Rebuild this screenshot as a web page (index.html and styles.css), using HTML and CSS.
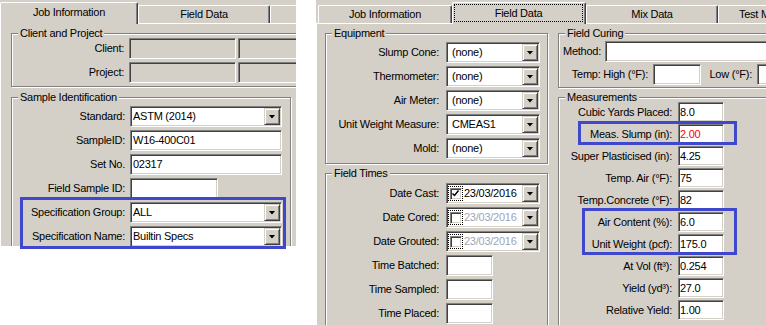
FILE: index.html
```html
<!DOCTYPE html>
<html>
<head>
<meta charset="utf-8">
<title>Concrete sample entry</title>
<link rel="stylesheet" href="styles.css">
</head>
<body>
<div class="stage">

  <section class="shot shot-left">
    <div class="panel">
      <div class="tabs">
        <div class="tab active t-job-l">Job Information</div>
        <div class="tab t-field-l">Field Data</div>
        <div class="tab t-rest"></div>
      </div>
      <div class="page page-left">
        <div class="group g-client">
          <span class="legend">Client and Project</span>
          <div class="row row-client"><span class="lbl">Client:</span><span class="input disabled w107"></span><span class="input disabled w100"></span></div>
          <div class="row row-client"><span class="lbl">Project:</span><span class="input disabled w107"></span><span class="input disabled w100"></span></div>
        </div>
        <div class="group g-sample">
          <span class="legend">Sample Identification</span>
          <div class="row"><span class="lbl">Standard:</span><span class="select w152"><span class="val">ASTM (2014)</span><span class="btn"></span></span></div>
          <div class="row"><span class="lbl">SampleID:</span><span class="input w152">W16-400C01</span></div>
          <div class="row"><span class="lbl">Set No.</span><span class="input w152">02317</span></div>
          <div class="row"><span class="lbl">Field Sample ID:</span><span class="input w88"></span></div>
          <div class="row"><span class="lbl">Specification Group:</span><span class="select w152"><span class="val">ALL</span><span class="btn"></span></span></div>
          <div class="row"><span class="lbl">Specification Name:</span><span class="select w152"><span class="val">Builtin Specs</span><span class="btn"></span></span></div>
        </div>
      </div>
    </div>
    <div class="mark mark-spec"></div>
  </section>

  <section class="shot shot-right">
    <div class="panel">
      <div class="tabs tabs-right">
        <div class="tab t-job-r">Job Information</div>
        <div class="tab active t-field-r"><span class="focus-tab">Field Data</span></div>
        <div class="tab t-mix-r">Mix Data</div>
        <div class="tab t-test-r">Test Methods</div>
      </div>
      <div class="page page-right">
        <div class="col col-a">
          <div class="group g-equip">
            <span class="legend">Equipment</span>
            <div class="row"><span class="lbl">Slump Cone:</span><span class="select wide w94"><span class="val">(none)</span><span class="btn"></span></span></div>
            <div class="row"><span class="lbl">Thermometer:</span><span class="select wide w94"><span class="val">(none)</span><span class="btn"></span></span></div>
            <div class="row"><span class="lbl">Air Meter:</span><span class="select wide w94"><span class="val">(none)</span><span class="btn"></span></span></div>
            <div class="row"><span class="lbl">Unit Weight Measure:</span><span class="select wide w94"><span class="val">CMEAS1</span><span class="btn"></span></span></div>
            <div class="row"><span class="lbl">Mold:</span><span class="select wide w94"><span class="val">(none)</span><span class="btn"></span></span></div>
          </div>
          <div class="group g-times">
            <span class="legend">Field Times</span>
            <div class="row"><span class="lbl">Date Cast:</span><span class="select date w94"><span class="val"><span class="focus"><span class="cb"><svg width="9" height="9" viewBox="0 0 9 9"><path d="M1.5 4.5 L3.5 6.5 L7.5 1.5" fill="none" stroke="#000" stroke-width="1.5"/></svg></span></span>23/03/2016</span><span class="btn"></span></span></div>
            <div class="row"><span class="lbl">Date Cored:</span><span class="select date off w94"><span class="val"><span class="focus"><span class="cb"></span></span>23/03/2016</span><span class="btn"></span></span></div>
            <div class="row"><span class="lbl">Date Grouted:</span><span class="select date off w94"><span class="val"><span class="focus"><span class="cb"></span></span>23/03/2016</span><span class="btn"></span></span></div>
            <div class="row"><span class="lbl">Time Batched:</span><span class="input w47"></span></div>
            <div class="row"><span class="lbl">Time Sampled:</span><span class="input w47"></span></div>
            <div class="row"><span class="lbl">Time Placed:</span><span class="input w47"></span></div>
          </div>
        </div>
        <div class="col col-b">
          <div class="group g-curing">
            <span class="legend">Field Curing</span>
            <div class="row row-method"><span class="lbl">Method:</span><span class="input w200"></span></div>
            <div class="row row-temp"><span class="lbl lbl-high">Temp: High (°F):</span><span class="input w48"></span><span class="lbl lbl-low">Low (°F):</span><span class="input w60"></span></div>
          </div>
          <div class="group g-meas">
            <span class="legend">Measurements</span>
            <div class="row"><span class="lbl">Cubic Yards Placed:</span><span class="input num w46">8.0</span></div>
            <div class="row"><span class="lbl">Meas. Slump (in):</span><span class="input num red w46">2.00</span></div>
            <div class="row"><span class="lbl">Super Plasticised (in):</span><span class="input num w46">4.25</span></div>
            <div class="row"><span class="lbl">Temp. Air (°F):</span><span class="input num w46">75</span></div>
            <div class="row"><span class="lbl">Temp.Concrete (°F):</span><span class="input num w46">82</span></div>
            <div class="row"><span class="lbl">Air Content (%):</span><span class="input num w46">6.0</span></div>
            <div class="row"><span class="lbl">Unit Weight (pcf):</span><span class="input num w46">175.0</span></div>
            <div class="row"><span class="lbl">At Vol (ft³):</span><span class="input num w46">0.254</span></div>
            <div class="row"><span class="lbl">Yield (yd³):</span><span class="input num w46">27.0</span></div>
            <div class="row"><span class="lbl">Relative Yield:</span><span class="input num w46">1.00</span></div>
          </div>
        </div>
      </div>
    </div>
    <div class="mark mark-slump"></div>
    <div class="mark mark-air"></div>
  </section>

</div>
</body>
</html>
```

FILE: styles.css
```css
* { box-sizing: border-box; }

body {
  margin: 0;
  background: #fff;
  font-family: "Liberation Sans", Arial, sans-serif;
  font-size: 11px;
  line-height: 13px;
  color: #000;
  letter-spacing: -0.25px;
}

.stage {
  display: flex;
  gap: 20px;
  align-items: flex-start;
  width: 766px;
  height: 325px;
  overflow: hidden;
}

.shot { position: relative; flex: none; }
.shot-left { width: 296px; height: 246px; }
.shot-right { width: 450px; height: 325px; }

.panel {
  width: 100%;
  height: 100%;
  background: #d4d0c8;
  overflow: hidden;
  display: flex;
  flex-direction: column;
}

/* tabs */
.tabs {
  display: flex;
  align-items: flex-end;
  height: 23px;
  flex: none;
}
.tabs-right { padding-left: 2px; }

.tab {
  flex: none;
  height: 18px;
  background: #d4d0c8;
  border-top: 1px solid #fff;
  border-left: 1px solid #fff;
  border-right: 1px solid #404040;
  border-top-left-radius: 2px;
  border-top-right-radius: 2px;
  box-shadow: inset -1px 0 #808080;
  display: flex;
  align-items: center;
  justify-content: center;
  white-space: nowrap;
}
.tab.active {
  height: 22px;
  margin-bottom: -1px;
  padding-bottom: 2px;
  position: relative;
  z-index: 1;
}
.t-job-l { width: 138px; }
.t-field-l { width: 132px; }
.t-rest { width: 60px; }
.t-job-r { width: 134px; }
.t-field-r { width: 134px; padding: 1px 2px 2px 1px; }
.t-mix-r { width: 132px; }
.t-test-r { width: 120px; justify-content: flex-start; padding-left: 20px; }

.focus-tab {
  flex: 1;
  align-self: stretch;
  border: 1px dotted #000;
  display: flex;
  align-items: center;
  justify-content: center;
  padding-top: 1px;
}

/* page */
.page {
  flex: 1;
  border-top: 1px solid #fff;
  border-left: 1px solid #fff;
}
.page-left {
  display: flex;
  flex-direction: column;
  align-items: flex-start;
  padding: 9px 0 0 10px;
}
.page-right {
  display: flex;
  align-items: flex-start;
  gap: 10px;
  padding: 9px 0 0 8px;
}
.col { display: flex; flex-direction: column; flex: none; }
.col-a { width: 223px; gap: 9px; }
.col-b { width: 260px; gap: 9px; }

/* group boxes */
.group {
  position: relative;
  flex: none;
  border: 1px solid #808080;
  box-shadow: inset 1px 1px #fff, 1px 1px #fff;
  display: flex;
  flex-direction: column;
  gap: 3px;
}
.legend {
  position: absolute;
  top: -7px;
  left: 6px;
  padding: 0 2px;
  background: #d4d0c8;
  line-height: 13px;
  white-space: nowrap;
}

.g-client { width: 320px; padding: 4px 0 3px; }
.g-sample { width: 280px; margin-top: 10px; padding-top: 8px; height: 160px; }
.g-equip { padding: 8px 0 4px; }
.g-times { padding-top: 9px; height: 170px; }
.g-curing { padding: 7px 0 2px; gap: 2px; }
.g-meas { padding-top: 4px; gap: 2px; height: 240px; }

/* rows */
.row {
  display: flex;
  align-items: center;
  gap: 5px;
  height: 21px;
  flex: none;
}
.lbl {
  flex: none;
  width: 113px;
  text-align: right;
  white-space: nowrap;
}
.row-client .lbl { width: 112px; }
.row-client { gap: 5px; }
.row-client .w107 { margin-right: -3px; }
.g-equip .row, .g-times .row { gap: 7px; }
.g-meas .row { height: 20px; gap: 6px; }

.row-method { gap: 4px; }
.row-method .lbl { width: 42px; }
.lbl-high { width: 89px; }
.lbl-low { width: 46px; }

/* controls */
.input {
  height: 100%;
  display: flex;
  align-items: center;
  flex: none;
  padding-left: 2px;
  background: #fff;
  border: 1px solid;
  border-color: #808080 #fff #fff #808080;
  box-shadow: inset 1px 1px #404040, inset -1px -1px #d4d0c8;
  white-space: nowrap;
  overflow: hidden;
}
.input.disabled { background: #d4d0c8; }
.input.num { padding-left: 1px; }
.input.red { color: #f00; }

.select {
  height: 100%;
  flex: none;
  display: flex;
  background: #fff;
  border: 1px solid;
  border-color: #808080 #fff #fff #808080;
  box-shadow: inset 1px 1px #404040, inset -1px -1px #d4d0c8;
}
.select .val {
  flex: 1;
  display: flex;
  align-items: center;
  padding-left: 2px;
  white-space: nowrap;
  overflow: hidden;
}
.select.wide .val { padding-left: 5px; }
.btn {
  flex: none;
  width: 16px;
  margin: 1px 1px 1px 0;
  background: #d4d0c8;
  border: 1px solid;
  border-color: #d4d0c8 #404040 #404040 #d4d0c8;
  box-shadow: inset 1px 1px #fff, inset -1px -1px #808080;
  display: flex;
  align-items: center;
  justify-content: center;
}
.btn::after {
  content: "";
  width: 7px;
  height: 4px;
  background: #000;
  clip-path: polygon(0 0, 100% 0, 50% 100%);
}

.select.date .val { padding-left: 1px; gap: 1px; }
.select.date.off .val { color: #9ea6b4; }
.focus {
  flex: none;
  width: 15px;
  height: 15px;
  border: 1px dotted #000;
  display: flex;
  align-items: center;
  justify-content: center;
}
.cb {
  width: 12px;
  height: 12px;
  background: #fff;
  border: 1px solid;
  border-color: #808080 #fff #fff #808080;
  box-shadow: inset 1px 1px #404040, inset -1px -1px #d4d0c8;
  display: flex;
  align-items: center;
  justify-content: center;
}
.cb svg { display: block; }

.w46 { width: 46px; }
.w47 { width: 47px; }
.w48 { width: 48px; }
.w60 { width: 60px; }
.w88 { width: 88px; }
.w94 { width: 94px; }
.w100 { width: 100px; }
.w107 { width: 107px; }
.w152 { width: 152px; }
.w200 { width: 200px; }

/* highlight annotations drawn over the screenshot */
.mark {
  position: absolute;
  border: 3px solid #3f48cc;
  z-index: 2;
}
.mark-spec { left: 20px; top: 197px; width: 266px; height: 52px; }
.mark-slump { left: 262px; top: 121px; width: 159px; height: 24px; }
.mark-air { left: 266px; top: 208px; width: 155px; height: 47px; }
```
